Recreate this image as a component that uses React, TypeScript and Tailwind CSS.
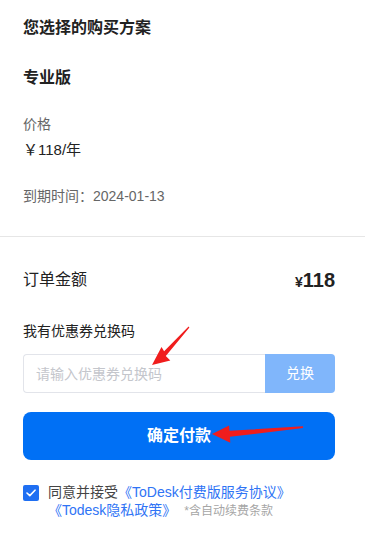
export default function App() {
  return (
    <div className="relative h-[558px] w-[365px] overflow-hidden bg-white font-['Liberation_Sans','Noto_Sans_CJK_SC',sans-serif] text-[#222]">
      <section className="px-[23px] pt-[17px]">
        <div className="text-[16px] font-bold leading-[22px]">您选择的购买方案</div>
        <div className="mt-[28px] text-[16px] font-bold leading-[22px]">专业版</div>
        <div className="mt-[25px] text-[14px] leading-[20px] text-[#666]">价格</div>
        <div className="mt-[5px] text-[15px] leading-[22px] text-[#222]">￥118/年</div>
        <div className="mt-[25px] text-[14px] leading-[20px] text-[#666]">到期时间：2024-01-13</div>
      </section>

      <div className="mt-[30px] h-px w-full bg-[#e6e6e6]" />

      <section className="pl-[23px] pr-[30px]">
        <div className="mt-[29px] flex h-[28px] items-center justify-between">
          <span className="text-[16px] text-[#222]">订单金额</span>
          <span className="flex items-baseline font-bold text-[#222]">
            <span className="text-[14px]">¥</span>
            <span className="text-[20px]">118</span>
          </span>
        </div>

        <div className="mt-[27px] text-[14px] leading-[20px] text-[#222]">我有优惠券兑换码</div>

        <div className="mt-[13px] flex h-[39px]">
          <input
            className="h-full min-w-0 flex-1 rounded-l-[4px] border border-r-0 border-[#e2e4ea] px-[12px] text-[14px] outline-none placeholder:text-[#c4c6cc]"
            placeholder="请输入优惠券兑换码"
          />
          <button className="h-full w-[70px] rounded-r-[4px] bg-[#80b6fb] text-[14px] text-white">兑换</button>
        </div>

        <button className="mt-[19px] h-[48px] w-full rounded-[8px] bg-[#0070f5] text-[16px] font-bold text-white">
          确定付款
        </button>

        <div className="mt-[23px] flex gap-[9px]">
          <span className="mt-[2px] flex h-[16px] w-[16px] shrink-0 items-center justify-center rounded-[2px] bg-[#1f6ff2]">
            <svg width="10" height="8" viewBox="0 0 10 8" fill="none">
              <path d="M1 4 L3.8 6.6 L9 1.2" stroke="white" strokeWidth="1.6" strokeLinecap="round" strokeLinejoin="round" />
            </svg>
          </span>
          <div className="text-[14px] leading-[18px] text-[#444]">
            同意并接受<span className="text-[#2f74f5]">《ToDesk付费版服务协议》</span>
            <br />
            <span className="text-[#2f74f5]">《Todesk隐私政策》</span>
            <span className="ml-[8px] text-[12px] text-[#a6a6a6]">*含自动续费条款</span>
          </div>
        </div>
      </section>

      <svg className="pointer-events-none absolute left-0 top-0" width="365" height="558" viewBox="0 0 365 558">
        <polygon
          fill="#f01d1d"
          points="189.4,327.4 165.8,356.1 170.3,360.4 152,365 161.5,347.1 164.1,351.3 188.6,326.6"
        />
        <polygon
          fill="#f01d1d"
          points="303,428 229.9,436.8 230.3,442.7 212,434 229.1,425.4 229.5,430.8 303,426.2"
        />
      </svg>
    </div>
  );
}
